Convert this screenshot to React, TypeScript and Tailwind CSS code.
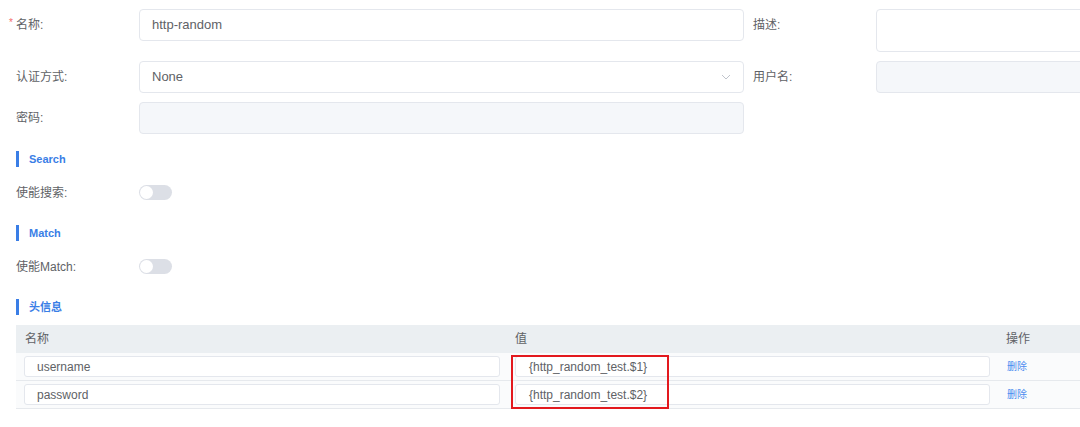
import React from "react";

const font = { fontFamily: '"Liberation Sans", "Noto Sans CJK SC", sans-serif' };

function Label({ children, req }: { children: React.ReactNode; req?: boolean }) {
  return (
    <div className="relative w-[123px] h-8 shrink-0 flex items-center text-[12px] text-[#606266]">
      {req && <span className="absolute left-[-7px] top-[9px] text-[#f56c6c] text-[10px] leading-none">*</span>}
      {children}
    </div>
  );
}

function SectionTitle({ children }: { children: React.ReactNode }) {
  return (
    <div className="flex items-center h-4">
      <div className="w-[3px] h-4 bg-[#3a7ee6]" />
      <span className="ml-[10px] text-[11px] font-bold text-[#3a7ee6]">{children}</span>
    </div>
  );
}

function Toggle() {
  return (
    <div className="w-[33px] h-[15px] shrink-0 rounded-full bg-[#dcdfe6] relative">
      <div className="absolute left-[1px] top-[1px] w-[13px] h-[13px] rounded-full bg-white" />
    </div>
  );
}

export default function App() {
  return (
    <div style={font} className="w-[1080px] h-[427px] overflow-hidden bg-white pl-4 pt-[9px] text-[#606266] relative">
      {/* row 1 */}
      <div className="flex items-start h-[43px]">
        <Label req>名称:</Label>
        <div className="w-[605px] shrink-0 h-8 border border-[#e4e7ed] rounded-[4px] flex items-center px-3 text-[13px] text-[#606266] bg-white">http-random</div>
        <div className="ml-[9px] w-[123px] shrink-0 h-8 flex items-center text-[12px]">描述:</div>
        <div className="w-[260px] shrink-0 h-[43px] border border-[#e4e7ed] rounded-[4px] bg-white" />
      </div>
      {/* row 2 */}
      <div className="flex h-8 mt-[9px]">
        <Label>认证方式:</Label>
        <div className="w-[605px] shrink-0 h-8 border border-[#e4e7ed] rounded-[4px] flex items-center justify-between pl-3 pr-[12px] text-[13px] bg-white">
          <span>None</span>
          <svg width="10" height="6" viewBox="0 0 10 6" fill="none"><path d="M1 1l4 4 4-4" stroke="#c0c4cc" strokeWidth="1" /></svg>
        </div>
        <div className="ml-[9px] w-[123px] shrink-0 flex items-center text-[12px]">用户名:</div>
        <div className="w-[260px] shrink-0 h-8 border border-[#e4e7ed] rounded-[4px] bg-[#f5f7fa]" />
      </div>
      {/* row 3 */}
      <div className="flex h-8 mt-[9px]">
        <Label>密码:</Label>
        <div className="w-[605px] shrink-0 h-8 border border-[#e4e7ed] rounded-[4px] bg-[#f5f7fa]" />
      </div>

      <div className="mt-[17px]"><SectionTitle>Search</SectionTitle></div>
      <div className="flex items-center mt-[18px] h-[15px]">
        <div className="w-[123px] shrink-0 text-[12px]">使能搜索:</div>
        <Toggle />
      </div>

      <div className="mt-[25px]"><SectionTitle>Match</SectionTitle></div>
      <div className="flex items-center mt-[18px] h-[15px]">
        <div className="w-[123px] shrink-0 text-[12px]">使能Match:</div>
        <Toggle />
      </div>

      <div className="mt-[25px]"><SectionTitle>头信息</SectionTitle></div>

      <div className="mt-[10px] w-[1064px] text-[12px]">
        <div className="flex h-[28px] items-center bg-[#ebeff2] text-[#606266]">
          <div className="w-[491px] shrink-0 pl-[9px]">名称</div>
          <div className="w-[491px] shrink-0 pl-[8px]">值</div>
          <div className="pl-[8px]">操作</div>
        </div>
        {[
          ["username", "{http_random_test.$1}"],
          ["password", "{http_random_test.$2}"],
        ].map(([n, v]) => (
          <div key={n} className="flex h-[28px] items-center bg-[#fafbfc] border-b border-[#e6e9ed]">
            <div className="w-[491px] shrink-0 pl-[8px] pr-[7px]">
              <div className="h-[21px] border border-[#e4e7ed] rounded-[3px] bg-white flex items-center pl-[12px] text-[12px] text-[#606266]">{n}</div>
            </div>
            <div className="w-[491px] shrink-0 pl-[8px] pr-[8px]">
              <div className="h-[21px] border border-[#e4e7ed] rounded-[3px] bg-white flex items-center pl-[13px] text-[12px] text-[#606266]">{v}</div>
            </div>
            <div className="pl-[9px] text-[10px] text-[#4a8cf0]">删除</div>
          </div>
        ))}
      </div>

      <div className="absolute left-[511px] top-[355px] w-[158px] h-[54px] border-2 border-[#e3191e]" />
    </div>
  );
}
